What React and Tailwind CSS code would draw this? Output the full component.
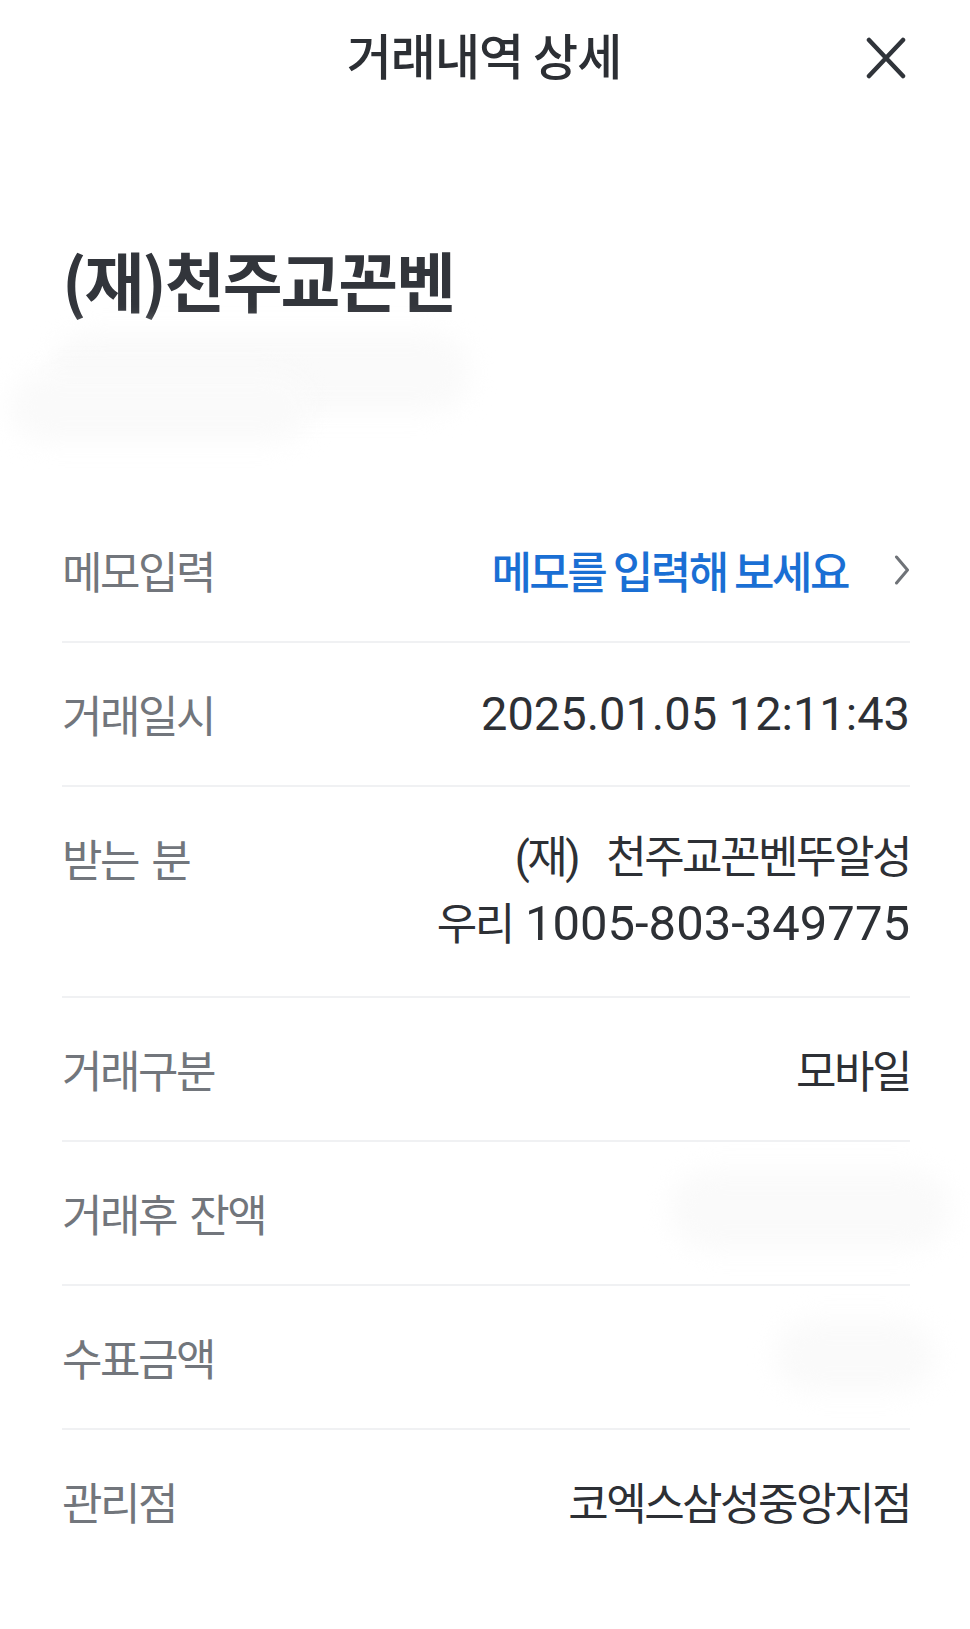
import React from 'react';

const KR = "font-['Noto_Sans_CJK_KR',sans-serif]";
const NUM = "font-['Roboto','Noto_Sans_CJK_KR',sans-serif]";

function CloseIcon() {
  return (
    <svg width="40" height="42" viewBox="0 0 40 42" fill="none" aria-hidden="true">
      <path d="M3 3 L37 39 M37 3 L3 39" stroke="#30343a" strokeWidth="4.5" strokeLinecap="round" />
    </svg>
  );
}

function Chevron() {
  return (
    <svg width="16" height="30" viewBox="0 0 16 30" fill="none" aria-hidden="true">
      <path d="M2.5 2 L13.5 15 L2.5 28" stroke="#6f7378" strokeWidth="3" strokeLinecap="round" strokeLinejoin="round" />
    </svg>
  );
}

// faint smear used where the original screenshot was masked out
function Smudge({ className }) {
  return <div className={`rounded-full bg-[#fafafa] blur-md ${className}`} />;
}

function Row({ label, children, last }) {
  return (
    <div>
      <div className="flex items-start justify-between py-[38px]">
        <span className={`${KR} text-[44px] leading-[66px] tracking-[-2.5px] [word-spacing:6px] text-[#72767c] whitespace-nowrap`}>
          {label}
        </span>
        <div className="flex flex-col items-end text-[#2d3035]">{children}</div>
      </div>
      {!last && <div className="h-[2px] bg-[#f0f1f3]" />}
    </div>
  );
}

export default function App() {
  return (
    <div className="w-[970px] min-h-[1629px] bg-white overflow-hidden">
      {/* Header */}
      <div className="grid grid-cols-[1fr_auto_1fr] items-center h-[108px] pl-[62px] pr-[64px]">
        <div />
        <h1 className={`${KR} text-[49px] font-medium leading-[60px] tracking-[-1px] text-[#2c2f34]`}>
          거래내역 상세
        </h1>
        <div className="flex justify-end pt-[8px]">
          <CloseIcon />
        </div>
      </div>

      {/* Payee name */}
      <div className="pl-[62px] pr-[60px] mt-[135px]">
        <h2 className={`${KR} text-[65px] font-bold leading-[72px] tracking-[-2px] text-[#32353b]`}>
          (재)천주교꼰벤
        </h2>
        <div className="relative -ml-[52px] mt-[7px] h-[135px] w-[478px]">
          <Smudge className="absolute left-[40px] top-[10px] h-[80px] w-[420px]" />
          <Smudge className="absolute left-0 top-[50px] h-[70px] w-[300px]" />
        </div>
      </div>

      {/* Detail rows */}
      <div className="pl-[62px] pr-[60px] mt-[42px]">
        <Row label="메모입력">
          <div className="flex items-center h-[66px]">
            <span className={`${KR} text-[44px] font-medium leading-[66px] tracking-[-2.5px] text-[#1a6fd4]`}>
              메모를 입력해 보세요
            </span>
            <span className="ml-[46px] flex items-center">
              <Chevron />
            </span>
          </div>
        </Row>

        <Row label="거래일시">
          <span className={`${NUM} text-[47px] leading-[66px]`}>2025.01.05 12:11:43</span>
        </Row>

        <Row label="받는 분">
          <span className={`${NUM} text-[44px] leading-[66px] tracking-[-2.5px]`}>
            (재)<span className="ml-[28px]">천주교꼰벤뚜알성</span>
          </span>
          <span className={`${NUM} text-[49px] leading-[66px]`}>
            <span className="text-[44px] tracking-[-2.5px]">우리</span> 1005-803-349775
          </span>
        </Row>

        <Row label="거래구분">
          <span className={`${KR} text-[44px] leading-[66px] tracking-[-2.5px]`}>모바일</span>
        </Row>

        <Row label="거래후 잔액">
          <div className="relative h-[66px] w-[280px] -mr-[40px]">
            <Smudge className="absolute -top-[10px] left-0 h-[80px] w-[280px]" />
          </div>
        </Row>

        <Row label="수표금액">
          <div className="relative h-[66px] w-[160px] -mr-[25px]">
            <Smudge className="absolute -top-[4px] left-0 h-[72px] w-[160px]" />
          </div>
        </Row>

        <Row label="관리점" last>
          <span className={`${KR} text-[44px] leading-[66px] tracking-[-2.5px]`}>코엑스삼성중앙지점</span>
        </Row>
      </div>
    </div>
  );
}
